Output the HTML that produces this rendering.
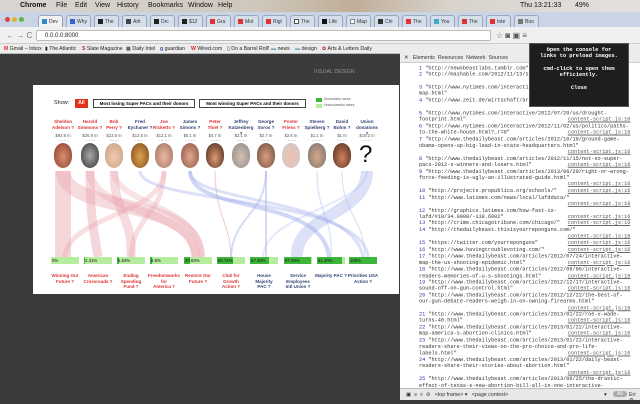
<!DOCTYPE html>
<html><head><meta charset="utf-8"><style>
*{margin:0;padding:0;box-sizing:border-box}
body{width:640px;height:400px;overflow:hidden;position:relative;background:#3b3b3b;font-family:"Liberation Sans",sans-serif}
.a{position:absolute}
.menu{left:0;top:0;width:640px;height:12px;background:linear-gradient(90deg,#d9d6d2,#cfc7bc 40%,#bfae98 55%,#d8d2cb 70%,#e3e1df);font-size:7px;color:#111}
.menu span{position:absolute;top:2px}
.tabs{left:0;top:12px;width:640px;height:15px;background:#c9d4e4}
.tab{position:absolute;top:3px;height:12px;width:25px;background:#d5deeb;border:1px solid #9aa8bc;border-bottom:none;border-radius:3px 3px 0 0;font-size:5px;padding:3px 0 0 10px;color:#333}
.tab i{position:absolute;left:3px;top:3px;width:5px;height:5px;background:#d33}
.addr{left:0;top:27px;width:640px;height:17px;background:#f0f0f0;border-bottom:1px solid #ccc}
.bm{left:0;top:44px;width:640px;height:10px;background:#ececec;border-bottom:1px solid #bbb;font-size:5.2px;color:#222}
.bm span{position:absolute;top:2px}
.card{left:33px;top:85px;width:366px;height:209px;background:#fff}
.nm{position:absolute;width:26px;text-align:center;font-size:4.6px;line-height:6px;font-weight:bold}
.r{color:#d33}.b{color:#347}
.amt{position:absolute;width:26px;text-align:center;font-size:4.2px;color:#555;line-height:5px}
.face{position:absolute;width:18px;height:25px;border-radius:50%/45%}
.bar{position:absolute;width:28px;height:7px;background:#b6ec9e;font-size:4.3px;color:#111;padding-left:1px;line-height:7px}
.bar b{position:absolute;left:0;top:0;height:7px;background:#3cb53a;z-index:0}
.bar span{position:relative;z-index:1}
.pac{position:absolute;width:32px;text-align:center;font-size:4.5px;line-height:5.5px;font-weight:bold}
.dev{left:400px;top:54px;width:240px;height:346px;background:#fff}
.log{position:absolute;left:419px;top:65px;width:254px;font-family:"Liberation Mono",monospace;font-size:6px;line-height:7.24px;color:#333;transform:scale(0.87);transform-origin:0 0}
.log div{height:7.24px;white-space:pre;position:relative;overflow:visible}
.log .e{margin-top:0.45px}
.log .n{color:#33a}
.log .s{position:absolute;right:11px;top:0;color:#555;text-decoration:underline;background:#fff}
.btn{position:absolute;top:14px;height:9px;border:1px solid #444;font-size:4.5px;font-weight:bold;text-align:center;line-height:7px;white-space:nowrap;overflow:hidden}
</style></head><body>
<div class="a menu"><span style="left:8px;font-size:8px;top:1px"></span><span style="left:20px;font-weight:bold">Chrome</span><span style="left:56px">File</span><span style="left:75px">Edit</span><span style="left:95px">View</span><span style="left:117px">History</span><span style="left:148px">Bookmarks</span><span style="left:188px">Window</span><span style="left:218px">Help</span><span style="left:520px">Thu 13:21:33</span><span style="left:575px">49%</span></div>
<div class="a tabs">
<span style="position:absolute;left:5px;top:5px;width:5px;height:5px;border-radius:50%;background:#e0443c"></span><span style="position:absolute;left:12px;top:5px;width:5px;height:5px;border-radius:50%;background:#e6b22c"></span><span style="position:absolute;left:19px;top:5px;width:5px;height:5px;border-radius:50%;background:#5fb640"></span>
<div class="tab" style="left:38px;background:#f2f2f2"><i style="background:#38c"></i>Dev</div>
<div class="tab" style="left:66px"><i style="background:#36c"></i>Why</div>
<div class="tab" style="left:94px"><i style="background:#222"></i>The</div>
<div class="tab" style="left:122px"><i style="background:#444"></i>Arti</div>
<div class="tab" style="left:150px"><i style="background:#222"></i>Drc</div>
<div class="tab" style="left:178px"><i style="background:#222"></i>$12</div>
<div class="tab" style="left:206px"><i></i>Gra</div>
<div class="tab" style="left:234px"><i></i>Mot</div>
<div class="tab" style="left:262px"><i></i>Rigl</div>
<div class="tab" style="left:290px"><i style="background:#fff;border:1px solid #555"></i>The</div>
<div class="tab" style="left:318px"><i style="background:#111"></i>Life</div>
<div class="tab" style="left:346px"><i style="background:#fff;border:1px solid #888"></i>Map</div>
<div class="tab" style="left:374px"><i style="background:#333"></i>Chi</div>
<div class="tab" style="left:402px"><i></i>The</div>
<div class="tab" style="left:430px"><i style="background:#4ac"></i>You</div>
<div class="tab" style="left:458px"><i></i>The</div>
<div class="tab" style="left:486px"><i></i>Inte</div>
<div class="tab" style="left:514px"><i style="background:#777"></i>Boo</div>
</div>
<div class="a addr"><div class="a" style="left:6px;top:4px;font-size:8px;color:#777">← → C</div><div class="a" style="left:36px;top:3px;width:455px;height:11px;background:#fff;border:1px solid #bbb;border-radius:2px;font-size:6px;padding:2px 0 0 8px;color:#222">0.0.0.0:8000</div><div class="a" style="left:496px;top:4px;font-size:8px;color:#555">☆ ◙ ▣ ≡</div></div>
<div class="a bm"><span style="left:4px"><b style="color:#d33">M</b> Gmail – Inbox</span><span style="left:45px">▮ The Atlantic</span><span style="left:82px"><b style="color:#a33">S</b> Slate Magazine</span><span style="left:126px">▦ Daily Intel</span><span style="left:160px"><b style="color:#35a">g</b> guardian</span><span style="left:191px"><b style="color:#d22">W</b> Wired.com</span><span style="left:227px">▯ Do a Barrel Roll!</span><span style="left:271px"><b style="color:#7ab">▬</b> news</span><span style="left:295px"><b style="color:#7ab">▬</b> design</span><span style="left:322px"><b style="color:#c33">✿</b> Arts &amp; Letters Daily</span></div>

<div class="a" style="left:314px;top:69px;font-size:5px;color:#999;letter-spacing:.2px">VISUAL DESIGN</div>
<div class="a card">
<div class="a" style="left:21px;top:15px;font-size:5.5px;color:#222">Show:</div>
<div class="a" style="left:42px;top:14px;width:13px;height:9px;background:#e0321c;color:#fff;font-size:5px;font-weight:bold;text-align:center;line-height:9px">All</div>
<div class="btn" style="left:60px;width:102px">Most losing Super PACs and their donors</div>
<div class="btn" style="left:166px;width:107px">Most winning Super PACs and their donors</div>
<div class="a" style="left:283px;top:13px;width:6px;height:4px;background:#3cb53a"></div><div class="a" style="left:291px;top:12px;font-size:3.5px;color:#555">Successful races</div>
<div class="a" style="left:283px;top:19px;width:6px;height:4px;background:#b6ec9e"></div><div class="a" style="left:291px;top:18px;font-size:3.5px;color:#555">Unsuccessful races</div>

<svg class="a" style="left:0;top:0" width="366" height="209">
<g fill="none" stroke-linecap="butt">
<path d="M30 86 V172" stroke="#e9a3ad" stroke-opacity=".45" stroke-width="16"/>
<path d="M30 86 C30 130 165 110 165 172" stroke="#e9a3ad" stroke-opacity=".4" stroke-width="14"/>
<path d="M57 86 C57 130 60 140 65 172" stroke="#e9a3ad" stroke-opacity=".45" stroke-width="9"/>
<path d="M57 86 C57 130 160 120 163 172" stroke="#e9a3ad" stroke-opacity=".35" stroke-width="8"/>
<path d="M81 86 C81 130 100 130 98 172" stroke="#e9a3ad" stroke-opacity=".4" stroke-width="9"/>
<path d="M81 86 C81 120 170 120 168 172" stroke="#e9a3ad" stroke-opacity=".3" stroke-width="6"/>
<path d="M131 86 C131 130 100 130 98 172" stroke="#e9a3ad" stroke-opacity=".35" stroke-width="5"/>
<path d="M131 86 C131 130 35 130 32 172" stroke="#e9a3ad" stroke-opacity=".35" stroke-width="5"/>
<path d="M182 86 C182 130 198 140 198 172" stroke="#e9a3ad" stroke-opacity=".6" stroke-width="1"/>
<path d="M107 86 C107 120 330 110 335 172" stroke="#9aa8e8" stroke-opacity=".35" stroke-width="3"/>
<path d="M157 86 C157 130 290 110 296 172" stroke="#9aa8e8" stroke-opacity=".45" stroke-width="4"/>
<path d="M157 86 C157 120 320 110 330 172" stroke="#9aa8e8" stroke-opacity=".35" stroke-width="3"/>
<path d="M233 86 C233 130 200 130 198 172" stroke="#9aa8e8" stroke-opacity=".4" stroke-width="2"/>
<path d="M233 86 V172" stroke="#9aa8e8" stroke-opacity=".4" stroke-width="2"/>
<path d="M309 86 C309 130 330 130 332 172" stroke="#9aa8e8" stroke-opacity=".4" stroke-width="1"/>
<path d="M334 86 C334 130 262 130 264 172" stroke="#9aa8e8" stroke-opacity=".35" stroke-width="12"/>
<path d="M284 86 C284 130 300 130 298 172" stroke="#9aa8e8" stroke-opacity=".3" stroke-width="1.5"/>
<path d="M334 86 C334 120 230 130 230 172" stroke="#9aa8e8" stroke-opacity=".25" stroke-width="2"/>
</g></svg>

<div class="nm r" style="left:17px;top:34px">Sheldon<br>Adelson ?</div>
<div class="nm r" style="left:44px;top:34px">Harold<br>Simmons ?</div>
<div class="nm r" style="left:68px;top:34px">Bob<br>Perry ?</div>
<div class="nm b" style="left:94px;top:34px">Fred<br>Eychaner ?</div>
<div class="nm r" style="left:118px;top:34px">Joe<br>Ricketts ?</div>
<div class="nm b" style="left:144px;top:34px">James<br>Simons ?</div>
<div class="nm r" style="left:169px;top:34px">Peter<br>Thiel ?</div>
<div class="nm b" style="left:195px;top:34px">Jeffrey<br>Katzenberg ?</div>
<div class="nm b" style="left:220px;top:34px">George<br>Soros ?</div>
<div class="nm r" style="left:245px;top:34px">Foster<br>Friess ?</div>
<div class="nm b" style="left:271px;top:34px">Steven<br>Spielberg ?</div>
<div class="nm b" style="left:296px;top:34px">David<br>Bohm ?</div>
<div class="nm b" style="left:321px;top:34px">Union<br>donations ?</div>

<div class="amt" style="left:17px;top:48px">$92.8 m<br>·······</div>
<div class="amt" style="left:44px;top:48px">$26.9 m<br>·······</div>
<div class="amt" style="left:68px;top:48px">$23.5 m<br>·······</div>
<div class="amt" style="left:94px;top:48px">$13.5 m<br>·······</div>
<div class="amt" style="left:118px;top:48px">$13.1 m<br>·······</div>
<div class="amt" style="left:144px;top:48px">$5.1 m<br>·······</div>
<div class="amt" style="left:169px;top:48px">$4.7 m<br>·······</div>
<div class="amt" style="left:195px;top:48px">$3.1 m<br>·······</div>
<div class="amt" style="left:220px;top:48px">$2.7 m<br>·······</div>
<div class="amt" style="left:245px;top:48px">$2.6 m<br>·······</div>
<div class="amt" style="left:271px;top:48px">$1.1 m<br>·······</div>
<div class="amt" style="left:296px;top:48px">$1 m<br>·······</div>
<div class="amt" style="left:321px;top:48px">$18.2 m<br>·······</div>

<div class="face" style="left:21px;top:58px;background:radial-gradient(ellipse at 50% 55%,#d89070,#8a3a28)"></div>
<div class="face" style="left:48px;top:58px;background:radial-gradient(ellipse at 50% 50%,#aaa,#333)"></div>
<div class="face" style="left:72px;top:58px;background:radial-gradient(ellipse at 50% 55%,#f0c8b0,#c8a080)"></div>
<div class="face" style="left:98px;top:58px;background:radial-gradient(ellipse at 50% 55%,#e0a050,#7a4a1a)"></div>
<div class="face" style="left:122px;top:58px;background:radial-gradient(ellipse at 50% 55%,#e8b8a0,#a07060)"></div>
<div class="face" style="left:148px;top:58px;background:radial-gradient(ellipse at 50% 55%,#e0a890,#8a5040)"></div>
<div class="face" style="left:173px;top:58px;background:radial-gradient(ellipse at 50% 60%,#e09870,#3a2418)"></div>
<div class="face" style="left:199px;top:58px;background:radial-gradient(ellipse at 50% 55%,#d8c0b0,#888)"></div>
<div class="face" style="left:224px;top:58px;background:radial-gradient(ellipse at 50% 55%,#d8a080,#6a4838)"></div>
<div class="face" style="left:249px;top:58px;background:radial-gradient(ellipse at 50% 55%,#f0c0b0,#ccc)"></div>
<div class="face" style="left:275px;top:58px;background:radial-gradient(ellipse at 50% 55%,#d8a888,#707070)"></div>
<div class="face" style="left:300px;top:58px;background:radial-gradient(ellipse at 50% 60%,#d08060,#4a2818)"></div>
<div class="a" style="left:326px;top:56px;font-size:24px;color:#111">?</div>

<div class="bar" style="left:18px;top:172px"><span>0%</span></div>
<div class="bar" style="left:51px;top:172px"><b style="width:1px"></b><span>3.31%</span></div>
<div class="bar" style="left:84px;top:172px"><b style="width:2px"></b><span>5.53%</span></div>
<div class="bar" style="left:117px;top:172px"><b style="width:2px"></b><span>8.8%</span></div>
<div class="bar" style="left:151px;top:172px"><b style="width:6px"></b><span>20.83%</span></div>
<div class="bar" style="left:184px;top:172px"><b style="width:16px"></b><span>60.72%</span></div>
<div class="bar" style="left:217px;top:172px"><b style="width:19px"></b><span>67.39%</span></div>
<div class="bar" style="left:251px;top:172px"><b style="width:27px"></b><span>97.09%</span></div>
<div class="bar" style="left:284px;top:172px"><b style="width:25px"></b><span>91.30%</span></div>
<div class="bar" style="left:316px;top:172px"><b style="width:28px"></b><span>100%</span></div>

<div class="pac r" style="left:16px;top:188px">Winning Our<br>Future ?</div>
<div class="pac r" style="left:49px;top:188px">American<br>Crossroads ?</div>
<div class="pac r" style="left:82px;top:188px">Ending<br>Spending<br>Fund ?</div>
<div class="pac r" style="left:115px;top:188px">Freedomworks<br>for<br>America ?</div>
<div class="pac r" style="left:149px;top:188px">Restore Our<br>Future ?</div>
<div class="pac r" style="left:182px;top:188px">Club for<br>Growth<br>Action ?</div>
<div class="pac b" style="left:215px;top:188px">House Majority<br>PAC ?</div>
<div class="pac b" style="left:249px;top:188px">Service<br>Employees<br>Intl Union ?</div>
<div class="pac b" style="left:282px;top:188px">Majority PAC ?</div>
<div class="pac b" style="left:314px;top:188px">Priorities USA<br>Action ?</div>
</div>

<div class="a dev"></div>
<div class="a" style="left:400px;top:53px;width:240px;height:10px;background:#ececec;border-bottom:1px solid #ccc;font-size:5.3px;color:#333;padding:2px 0 0 4px">✕ &nbsp; Elements &nbsp;Resources &nbsp;Network &nbsp;Sources</div>
<div class="log">
<div><span class="n">1</span> "http://newsbeastlabs.tumblr.com"</div>
<div><span class="n">2</span> "http://mashable.com/2012/11/13/s</div>
<div></div>
<div class="e"><span class="n">3</span> "http://www.nytimes.com/interacti</div>
<div>map.html"</div>
<div class="e"><span class="n">4</span> "http://www.zeit.de/wirtschaft/ar</div>
<div></div>
<div class="e"><span class="n">5</span> "http://www.nytimes.com/interactive/2012/07/20/us/drought-</div>
<div>footprint.html"<span class="s">content-script.js:16</span></div>
<div class="e"><span class="n">6</span> "http://www.nytimes.com/interactive/2012/11/02/us/politics/paths-</div>
<div>to-the-white-house.html?_r=0"<span class="s">content-script.js:16</span></div>
<div class="e"><span class="n">7</span> "http://www.thedailybeast.com/articles/2012/10/19/ground-game-</div>
<div>obama-opens-up-big-lead-in-state-headquarters.html"</div>
<div><span class="s">content-script.js:16</span></div>
<div class="e"><span class="n">8</span> "http://www.thedailybeast.com/articles/2012/11/15/not-so-super-</div>
<div>pacs-2012-s-winners-and-losers.html"<span class="s">content-script.js:16</span></div>
<div class="e"><span class="n">9</span> "http://www.thedailybeast.com/articles/2013/06/20/right-or-wrong-</div>
<div>force-feeding-is-ugly-an-illustrated-guide.html"</div>
<div><span class="s">content-script.js:16</span></div>
<div class="e"><span class="n">10</span> "http://projects.propublica.org/schools/"<span class="s">content-script.js:16</span></div>
<div class="e"><span class="n">11</span> "http://www.latimes.com/news/local/lafddata/"</div>
<div><span class="s">content-script.js:16</span></div>
<div class="e"><span class="n">12</span> "http://graphics.latimes.com/how-fast-is-</div>
<div>lafd/#10/34.0008/-118.6002"<span class="s">content-script.js:16</span></div>
<div class="e"><span class="n">13</span> "http://crime.chicagotribune.com/chicago/"<span class="s">content-script.js:16</span></div>
<div class="e"><span class="n">14</span> "http://thedailybeast.thisisyourreponguns.com/"</div>
<div><span class="s">content-script.js:16</span></div>
<div class="e"><span class="n">15</span> "https://twitter.com/yourreponguns"<span class="s">content-script.js:16</span></div>
<div class="e"><span class="n">16</span> "http://www.havingtroublevoting.com/"<span class="s">content-script.js:16</span></div>
<div class="e"><span class="n">17</span> "http://www.thedailybeast.com/articles/2012/07/24/interactive-</div>
<div>map-the-us-shooting-epidemic.html"<span class="s">content-script.js:16</span></div>
<div class="e"><span class="n">18</span> "http://www.thedailybeast.com/articles/2012/08/06/interactive-</div>
<div>readers-memories-of-u-s-shootings.html"<span class="s">content-script.js:16</span></div>
<div class="e"><span class="n">19</span> "http://www.thedailybeast.com/articles/2012/12/17/interactive-</div>
<div>sound-off-on-gun-control.html"<span class="s">content-script.js:16</span></div>
<div class="e"><span class="n">20</span> "http://www.thedailybeast.com/articles/2012/12/22/the-best-of-</div>
<div>our-gun-debate-readers-weigh-in-on-owning-firearms.html"</div>
<div><span class="s">content-script.js:16</span></div>
<div class="e"><span class="n">21</span> "http://www.thedailybeast.com/articles/2013/01/22/roe-v-wade-</div>
<div>turns-40.html"<span class="s">content-script.js:16</span></div>
<div class="e"><span class="n">22</span> "http://www.thedailybeast.com/articles/2013/01/22/interactive-</div>
<div>map-america-s-abortion-clinics.html"<span class="s">content-script.js:16</span></div>
<div class="e"><span class="n">23</span> "http://www.thedailybeast.com/articles/2013/01/22/interactive-</div>
<div>readers-share-their-views-on-the-pro-choice-and-pro-life-</div>
<div>labels.html"<span class="s">content-script.js:16</span></div>
<div class="e"><span class="n">24</span> "http://www.thedailybeast.com/articles/2013/01/22/daily-beast-</div>
<div>readers-share-their-stories-about-abortion.html"</div>
<div><span class="s">content-script.js:16</span></div>
<div class="e"><span class="n">25</span> "http://www.thedailybeast.com/articles/2013/06/25/the-drastic-</div>
<div>effect-of-texas-s-new-abortion-bill-all-in-one-interactive-</div>
<div>map.html"<span class="s">content-script.js:16</span></div>
</div>
<div class="a" style="left:400px;top:388px;width:240px;height:12px;background:#e8e8e8;border-top:1px solid #bbb;font-size:5.3px;color:#333;padding:3px 0 0 6px">▣ &nbsp;≡ &nbsp;⌕ &nbsp;⊘ &nbsp; &lt;top frame&gt; ▾ &nbsp; &lt;page context&gt;<span style="position:absolute;left:204px;top:3px">▾</span><span style="position:absolute;left:213px;top:2px;background:#aaa;color:#fff;border-radius:4px;padding:0 4px">All</span><span style="position:absolute;left:229px;top:3px">Err ⚙</span></div>
<div class="a" style="left:529px;top:43px;width:100px;height:64px;background:#1e1e1e;border:1px solid #555;color:#fff;font-family:'Liberation Mono',monospace;font-size:5.4px;font-weight:bold;text-align:center;line-height:6.3px;padding-top:3px">Open the console for<br>links to preload images.<br><br>cmd-click to open them<br>efficiently.<br><br>Close</div>
</body></html>
